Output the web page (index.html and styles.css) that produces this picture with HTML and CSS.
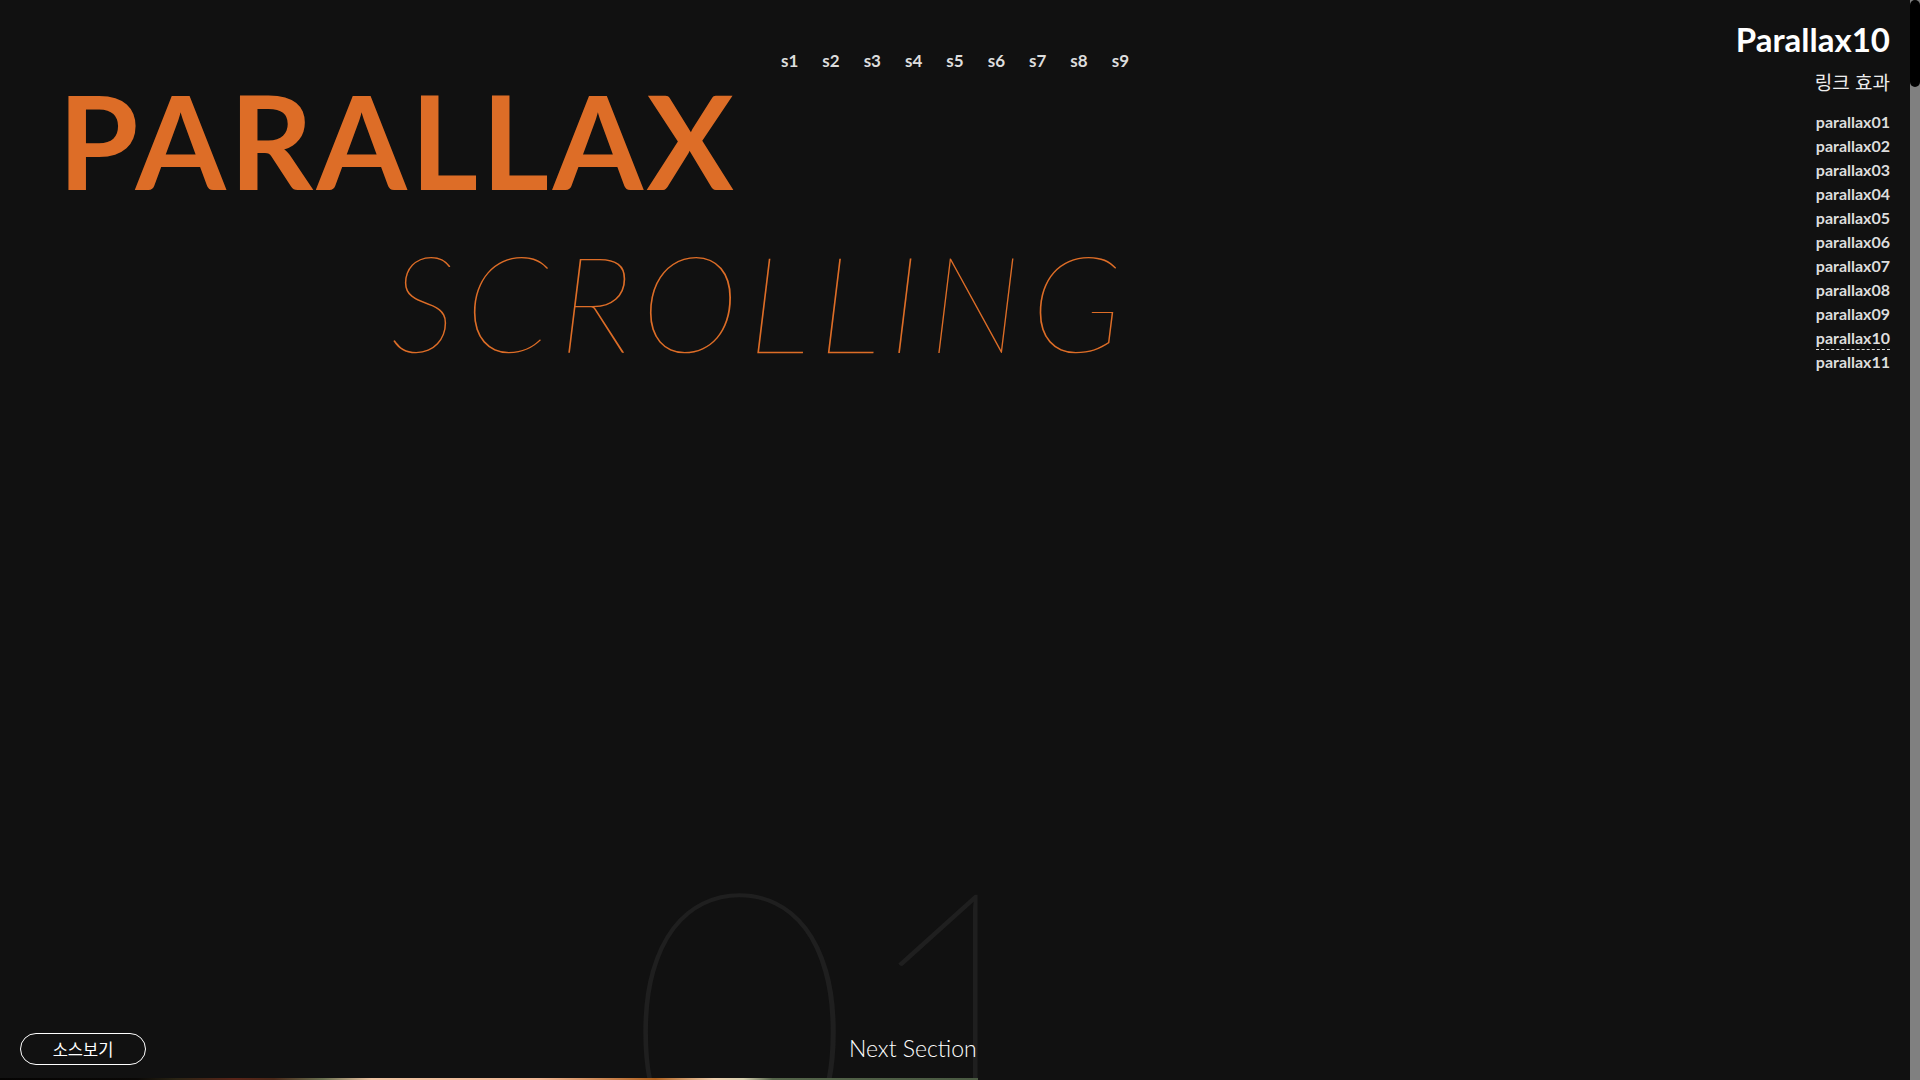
FILE: index.html
```html
<!DOCTYPE html>
<html lang="ko">
<head>
<meta charset="utf-8">
<title>Parallax10</title>
<link rel="stylesheet" href="styles.css">
</head>
<body>
<div class="page">
  <main class="stage">
    <header class="info">
      <h1 class="info-title">Parallax10</h1>
      <p class="info-sub">링크 효과</p>
      <ul class="info-list">
        <li><a href="#">parallax01</a></li>
        <li><a href="#">parallax02</a></li>
        <li><a href="#">parallax03</a></li>
        <li><a href="#">parallax04</a></li>
        <li><a href="#">parallax05</a></li>
        <li><a href="#">parallax06</a></li>
        <li><a href="#">parallax07</a></li>
        <li><a href="#">parallax08</a></li>
        <li><a href="#">parallax09</a></li>
        <li><a href="#" class="active">parallax10</a></li>
        <li><a href="#">parallax11</a></li>
      </ul>
    </header>

    <nav class="dots">
      <a href="#">s1</a><a href="#">s2</a><a href="#">s3</a><a href="#">s4</a><a href="#">s5</a><a href="#">s6</a><a href="#">s7</a><a href="#">s8</a><a href="#">s9</a>
    </nav>

    <section class="sec">
      <h2 class="t1">PARALLAX</h2>
      <h3 class="t2">SCROLLING</h3>
      <div class="num">01</div>
      <p class="next">Next Section</p>
    </section>

    <a class="src" href="#">소스보기</a>
    <div class="peek"></div>
  </main>
  <div class="scrollbar"><div class="thumb"></div></div>
</div>
</body>
</html>
```

FILE: styles.css
```css
* { box-sizing: border-box; margin: 0; padding: 0; }
html, body { width: 1920px; height: 1080px; overflow: hidden; background: #111; }
body { font-family: Lato, "Noto Sans CJK KR", sans-serif; color: #fff; }
a { color: inherit; text-decoration: none; }
ul { list-style: none; }

.page { display: flex; width: 1920px; height: 1080px; }
.stage { position: relative; flex: 1; height: 1080px; overflow: hidden; background: #111; }

.scrollbar { width: 10px; height: 1080px; background: #808080; }
.thumb { height: 87px; background: #000; border-radius: 5px; }

/* top right info */
.info { position: absolute; top: 19px; right: 20px; text-align: right; z-index: 3; }
.info-title { font-size: 33px; font-weight: 700; line-height: 40px; color: #fff; }
.info-sub { margin-top: 10px; font-family: "Noto Sans CJK KR", Lato, sans-serif; font-size: 19px; line-height: 26px; color: #eee; font-weight: 400; }
.info-list { margin-top: 16px; }
.info-list li { height: 24px; }
.info-list a { font-size: 16px; font-weight: 700; color: #ddd; display: inline-block; line-height: 22px; border-bottom: 1px dashed transparent; }
.info-list a.active { border-bottom-color: #ddd; }

/* section nav */
.dots { position: absolute; top: 49px; left: 0; right: 0; display: flex; justify-content: center; z-index: 3; }
.dots a { font-size: 17px; font-weight: 700; color: #ddd; padding: 0 12px; line-height: 24px; }

/* section */
.sec { padding-top: 62px; height: 1080px; }
.t1 { font-size: 130px; font-weight: 700; line-height: 156px; color: #dd6d27; padding-left: 58px; letter-spacing: 3.6px; }
.t2 { margin-top: 4px; font-size: 134px; font-weight: 100; font-style: italic; line-height: 160px; color: #dd6d27; padding-left: 390px; letter-spacing: 9px; }
.num { position: absolute; left: 627px; top: 824px; font-size: 388px; font-weight: 100; line-height: 1; color: #1f1f1f; z-index: 0; }
.next { position: absolute; left: 849px; top: 1033px; font-size: 23px; font-weight: 300; line-height: 30px; color: #fff; z-index: 2; }

.src { position: absolute; left: 20px; top: 1033px; width: 126px; height: 32px; border: 1px solid #fff; border-radius: 16px; display: flex; align-items: center; justify-content: center; font-family: "Noto Sans CJK KR", sans-serif; font-size: 16.5px; color: #fff; z-index: 3; }

.peek { position: absolute; left: 0; bottom: 0; width: 978px; height: 2px; z-index: 2;
  background: linear-gradient(90deg, #050403 0%, #0a0806 14%, #2a2414 18%, #5a2418 24%, #4a2818 28%, #6a7050 33%, #f0c4a4 38%, #f4b898 55%, #b0601e 67%, #f0d0b0 73%, #d8d0b0 76%, #55654a 79%, #4a5a42 100%); }
```
